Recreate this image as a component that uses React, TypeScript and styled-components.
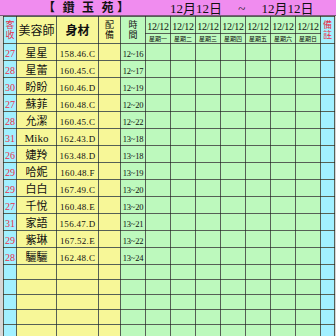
import React from "react";
import styled, { createGlobalStyle } from "styled-components";

const GlobalStyle = createGlobalStyle`
  html, body {
    margin: 0;
    padding: 0;
    background: #d6d6d6;
  }
  body {
    font-family: "Liberation Serif", "Noto Sans CJK TC", serif;
  }
`;

const tones = {
  cyan: "#a2f0ff",
  yellow: "#f7f798",
  green: "#bdf9bd",
};

type Tone = keyof typeof tones;

const Page = styled.div`
  width: 336px;
  height: 336px;
  overflow: hidden;
`;

const TitleBar = styled.div`
  display: flex;
  align-items: center;
  height: 15px;
  background: #f08cef;
  border-bottom: 1px solid #7a5a7a;
  color: #111;
`;

const ShopName = styled.div`
  flex: 0 0 170px;
  box-sizing: border-box;
  padding-left: 43px;
  display: flex;
  align-items: center;
  gap: 7.5px;
  font-size: 12px;
  font-weight: bold;
  line-height: 1;
`;

const Glyph = styled.span<{ $pull?: number }>`
  width: 12px;
  text-align: center;
  margin-left: ${(p) => p.$pull ?? 0}px;
`;

const DateRange = styled.div`
  flex: 1;
  min-width: 0;
  text-align: center;
  font-size: 13px;
  white-space: pre;
  padding-right: 30px;
`;

const Sheet = styled.table`
  border-collapse: collapse;
  table-layout: fixed;
  width: 331px;
  margin-left: 3px;
`;

const Cell = styled.td<{ $tone: Tone }>`
  background: ${(p) => tones[p.$tone]};
  border: 1px solid rgba(25, 40, 25, 0.68);
  padding: 0;
  text-align: center;
  vertical-align: middle;
  overflow: hidden;
  white-space: nowrap;
  color: #111;
  line-height: 1;
`;

const HeadRow = styled.tr`
  height: 12px;
`;

const SubRow = styled.tr`
  height: 10px;
`;

const Row = styled.tr`
  height: 15px;
`;

const Stack = styled.div<{ $red?: boolean }>`
  display: flex;
  flex-direction: column;
  align-items: center;
  font-size: 9px;
  line-height: 10px;
  color: ${(p) => (p.$red ? "#e8304a" : "#111")};
`;

const BigLabel = styled.span<{ $bold?: boolean }>`
  font-size: 12px;
  font-weight: ${(p) => (p.$bold ? "bold" : "normal")};
`;

const DayDate = styled.span`
  font-size: 10px;
  letter-spacing: -0.3px;
`;

const DayName = styled.span`
  display: block;
  font-size: 6px;
  line-height: 8px;
`;

const Age = styled.span`
  font-size: 10px;
  color: #e8304a;
`;

const Name = styled.span`
  font-size: 11px;
`;

const Figure = styled.span`
  font-size: 9px;
  letter-spacing: 0.3px;
`;

const Time = styled.span`
  font-size: 8.5px;
  letter-spacing: -0.2px;
`;

const stylists = [
  ["27", "星星", "158.46.C", "12~16"],
  ["28", "星蕾", "160.45.C", "12~17"],
  ["30", "盼盼", "160.46.D", "12~19"],
  ["27", "蘇菲", "160.48.C", "12~20"],
  ["28", "允潔", "160.45.C", "12~22"],
  ["31", "Miko", "162.43.D", "13~18"],
  ["26", "婕羚", "163.48.D", "13~18"],
  ["29", "哈妮", "160.48.F", "13~19"],
  ["29", "白白", "167.49.C", "13~20"],
  ["27", "千悅", "160.48.E", "13~20"],
  ["31", "家語", "156.47.D", "13~21"],
  ["29", "紫琳", "167.52.E", "13~22"],
  ["28", "驪驪", "162.48.C", "13~24"],
];

const days = ["星期一", "星期二", "星期三", "星期四", "星期五", "星期六", "星期日"];
const widths = [13, 40, 42, 22, 25, 25, 25, 25, 25, 25, 25, 25, 14];
const emptyRows = 7;

const DayCells = () => (
  <>
    {days.map((d) => (
      <Cell key={d} $tone="green" />
    ))}
  </>
);

export default function App() {
  return (
    <Page>
      <GlobalStyle />
      <TitleBar>
        <ShopName>
          <Glyph>【</Glyph>
          <Glyph>鑽</Glyph>
          <Glyph>玉</Glyph>
          <Glyph>苑</Glyph>
          <Glyph $pull={-4}>】</Glyph>
        </ShopName>
        <DateRange>12月12日　 ~ 　12月12日</DateRange>
      </TitleBar>
      <Sheet>
        <colgroup>
          {widths.map((w, i) => (
            <col key={i} style={{ width: w }} />
          ))}
        </colgroup>
        <tbody>
          <HeadRow>
            <Cell $tone="cyan" rowSpan={2}>
              <Stack $red>
                <span>客</span>
                <span>收</span>
              </Stack>
            </Cell>
            <Cell $tone="yellow" rowSpan={2}>
              <BigLabel>美容師</BigLabel>
            </Cell>
            <Cell $tone="yellow" rowSpan={2}>
              <BigLabel $bold>身材</BigLabel>
            </Cell>
            <Cell $tone="yellow" rowSpan={2}>
              <Stack>
                <span>配</span>
                <span>備</span>
              </Stack>
            </Cell>
            <Cell $tone="green" rowSpan={2}>
              <Stack>
                <span>時</span>
                <span>間</span>
              </Stack>
            </Cell>
            {days.map((d) => (
              <Cell key={d} $tone="green">
                <DayDate>12/12</DayDate>
              </Cell>
            ))}
            <Cell $tone="cyan" rowSpan={2}>
              <Stack $red>
                <span>備</span>
                <span>註</span>
              </Stack>
            </Cell>
          </HeadRow>
          <SubRow>
            {days.map((d) => (
              <Cell key={d} $tone="green">
                <DayName>{d}</DayName>
              </Cell>
            ))}
          </SubRow>
          {stylists.map(([age, name, figure, time]) => (
            <Row key={name + time}>
              <Cell $tone="cyan">
                <Age>{age}</Age>
              </Cell>
              <Cell $tone="yellow">
                <Name>{name}</Name>
              </Cell>
              <Cell $tone="yellow">
                <Figure>{figure}</Figure>
              </Cell>
              <Cell $tone="yellow" />
              <Cell $tone="green">
                <Time>{time}</Time>
              </Cell>
              <DayCells />
              <Cell $tone="cyan" />
            </Row>
          ))}
          {Array.from({ length: emptyRows }, (_, i) => (
            <Row key={"empty" + i}>
              <Cell $tone="cyan" />
              <Cell $tone="yellow" />
              <Cell $tone="yellow" />
              <Cell $tone="yellow" />
              <Cell $tone="green" />
              <DayCells />
              <Cell $tone="cyan" />
            </Row>
          ))}
        </tbody>
      </Sheet>
    </Page>
  );
}
